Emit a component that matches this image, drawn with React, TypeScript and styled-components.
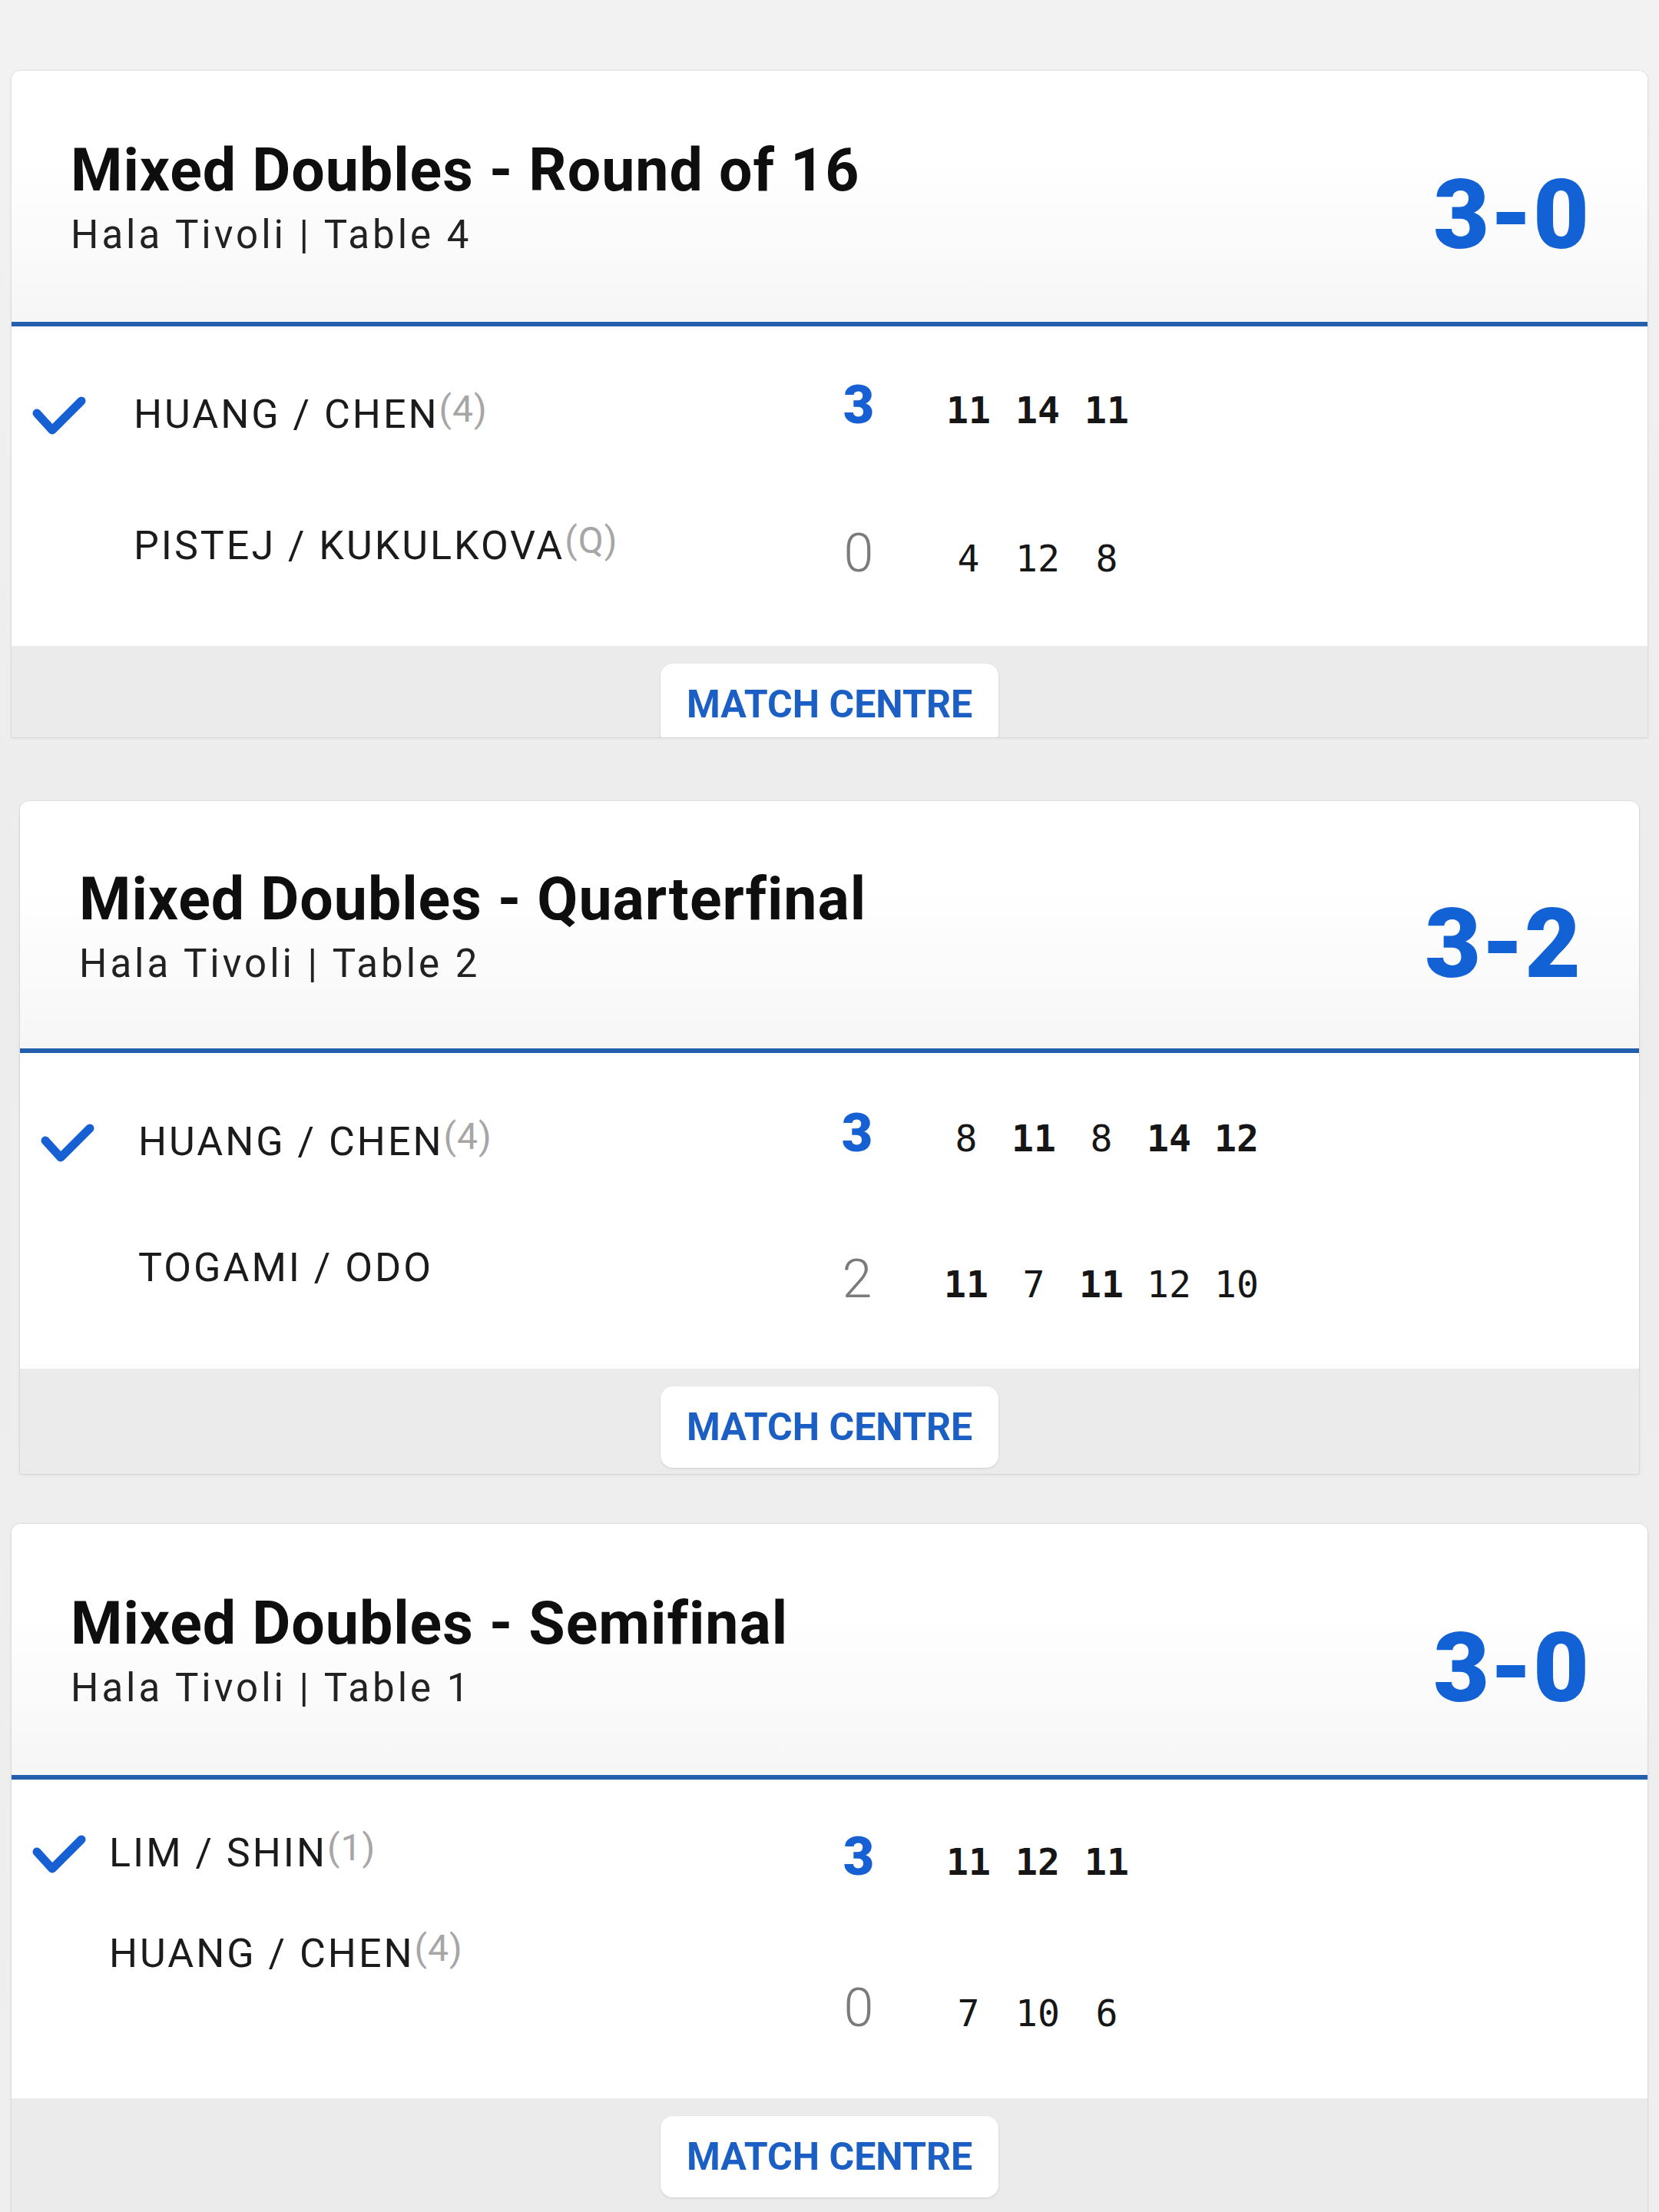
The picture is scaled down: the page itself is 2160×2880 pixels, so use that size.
import React from 'react'
import styled, { createGlobalStyle } from 'styled-components'

type Team = {
  name: string
  seed?: string
  sets: number
  games: number[]
}

type Layout = {
  top: number
  inset: number
  headerHeight: number
  headerPad: number
  bodyHeight: number
  namesWidth: number
  namesPad: number
  namesGap: number
  checkSlot: number
  scoresPad: number
  scoresGap: number
  gameWidth: number
  footerHeight: number
}

type Match = {
  title: string
  venue: string
  result: string
  teams: [Team, Team]
  layout: Layout
}

const matches: Match[] = [
  {
    title: 'Mixed Doubles - Round of 16',
    venue: 'Hala Tivoli | Table 4',
    result: '3-0',
    teams: [
      { name: 'HUANG / CHEN', seed: '(4)', sets: 3, games: [11, 14, 11] },
      { name: 'PISTEJ / KUKULKOVA', seed: '(Q)', sets: 0, games: [4, 12, 8] },
    ],
    layout: {
      top: 0,
      inset: 15,
      headerHeight: 333,
      headerPad: 85,
      bodyHeight: 416,
      namesWidth: 1038,
      namesPad: 81,
      namesGap: 111,
      checkSlot: 134,
      scoresPad: 62,
      scoresGap: 113,
      gameWidth: 90,
      footerHeight: 119,
    },
  },
  {
    title: 'Mixed Doubles - Quarterfinal',
    venue: 'Hala Tivoli | Table 2',
    result: '3-2',
    teams: [
      { name: 'HUANG / CHEN', seed: '(4)', sets: 3, games: [8, 11, 8, 14, 12] },
      { name: 'TOGAMI / ODO', sets: 2, games: [11, 7, 11, 12, 10] },
    ],
    layout: {
      top: 83,
      inset: 26,
      headerHeight: 328,
      headerPad: 83,
      bodyHeight: 411,
      namesWidth: 1025,
      namesPad: 82,
      namesGap: 108,
      checkSlot: 129,
      scoresPad: 64,
      scoresGap: 110,
      gameWidth: 88,
      footerHeight: 137,
    },
  },
  {
    title: 'Mixed Doubles - Semifinal',
    venue: 'Hala Tivoli | Table 1',
    result: '3-0',
    teams: [
      { name: 'LIM / SHIN', seed: '(1)', sets: 3, games: [11, 12, 11] },
      { name: 'HUANG / CHEN', seed: '(4)', sets: 0, games: [7, 10, 6] },
    ],
    layout: {
      top: 65,
      inset: 15,
      headerHeight: 333,
      headerPad: 85,
      bodyHeight: 415,
      namesWidth: 1038,
      namesPad: 62,
      namesGap: 71,
      checkSlot: 102,
      scoresPad: 60,
      scoresGap: 117,
      gameWidth: 90,
      footerHeight: 220,
    },
  },
]

const GlobalStyle = createGlobalStyle`
  html, body {
    margin: 0;
    padding: 0;
  }
  body {
    background: #eeeeee;
    font-family: Roboto, 'Noto Sans', Arial, sans-serif;
    -webkit-font-smoothing: antialiased;
  }
`

const Page = styled.div`
  width: 2160px;
  height: 2880px;
  box-sizing: border-box;
  padding-top: 92px;
  display: flex;
  flex-direction: column;
  overflow: hidden;
  background: linear-gradient(180deg, #f2f2f2 0%, #ededed 40%, #efefef 100%);
`

const Card = styled.section<{ $top: number; $inset: number }>`
  flex: none;
  margin: ${(p) => p.$top}px ${(p) => p.$inset}px 0;
  background: #fff;
  border-radius: 12px 12px 0 0;
  overflow: hidden;
  box-shadow: 0 0 0 1px rgba(0, 0, 0, 0.05), 0 1px 4px rgba(0, 0, 0, 0.08);
`

const Header = styled.header<{ $h: number; $pad: number }>`
  height: ${(p) => p.$h}px;
  box-sizing: border-box;
  padding: ${(p) => p.$pad}px 76px 0 77px;
  display: flex;
  justify-content: space-between;
  align-items: flex-start;
  background: linear-gradient(180deg, #ffffff 0%, #ffffff 35%, #f6f6f6 100%);
  border-bottom: 6px solid #235fad;
`

const Titles = styled.div`
  display: flex;
  flex-direction: column;
`

const Title = styled.h2`
  margin: 0;
  font-size: 77px;
  line-height: 90px;
  font-weight: 700;
  letter-spacing: 1px;
  color: #0e0e0e;
  white-space: nowrap;
`

const Venue = styled.div`
  margin-top: 9px;
  font-size: 51px;
  line-height: 60px;
  letter-spacing: 4px;
  color: #222;
  white-space: nowrap;
`

const Result = styled.div`
  margin-top: 40px;
  font-size: 126px;
  line-height: 126px;
  font-weight: 900;
  color: #1262d6;
`

const Body = styled.div<{ $h: number }>`
  height: ${(p) => p.$h}px;
  box-sizing: border-box;
  padding-left: 25px;
  display: flex;
  background: #fff;
`

const Names = styled.div<{ $w: number; $pad: number; $gap: number }>`
  flex: 0 0 ${(p) => p.$w}px;
  display: flex;
  flex-direction: column;
  padding-top: ${(p) => p.$pad}px;
  gap: ${(p) => p.$gap}px;
`

const NameRow = styled.div`
  display: flex;
  align-items: center;
  height: 60px;
`

const CheckSlot = styled.div<{ $w: number }>`
  flex: 0 0 ${(p) => p.$w}px;
  display: flex;
  align-items: center;
  svg {
    margin-top: 12px;
  }
`

const TeamName = styled.span`
  font-size: 52px;
  line-height: 60px;
  letter-spacing: 3px;
  color: #1b1b1b;
  white-space: nowrap;
`

const Seed = styled.span`
  font-size: 48px;
  letter-spacing: 1px;
  vertical-align: 8px;
  color: #a6a6a6;
`

const Scores = styled.div<{ $pad: number; $gap: number }>`
  display: flex;
  flex-direction: column;
  padding-top: ${(p) => p.$pad}px;
  gap: ${(p) => p.$gap}px;
`

const ScoreRow = styled.div`
  display: flex;
  align-items: baseline;
  height: 80px;
`

const SetScore = styled.span<{ $won: boolean }>`
  width: 80px;
  margin-right: 58px;
  text-align: center;
  font-size: 70px;
  line-height: 80px;
  font-weight: ${(p) => (p.$won ? 900 : 300)};
  color: ${(p) => (p.$won ? '#1660d4' : '#7b7b7b')};
`

const Game = styled.span<{ $w: number; $won: boolean }>`
  width: ${(p) => p.$w}px;
  text-align: center;
  font-family: 'DejaVu Sans Mono', 'Liberation Mono', monospace;
  font-size: 48px;
  line-height: 80px;
  font-weight: ${(p) => (p.$won ? 700 : 400)};
  color: #161616;
`

const Footer = styled.footer<{ $h: number }>`
  height: ${(p) => p.$h}px;
  box-sizing: border-box;
  padding-top: 23px;
  display: flex;
  justify-content: center;
  align-items: flex-start;
  background: #ebebeb;
`

const MatchCentre = styled.button`
  width: 440px;
  height: 106px;
  border: none;
  border-radius: 16px;
  background: #fff;
  box-shadow: 0 1px 3px rgba(0, 0, 0, 0.12);
  font-family: Roboto, Arial, sans-serif;
  font-size: 50px;
  font-weight: 700;
  color: #1b5fc5;
  cursor: pointer;
`

function Check() {
  return (
    <svg width="74" height="56" viewBox="0 0 74 56" aria-hidden>
      <polyline
        points="8,24 28,46 66,8"
        fill="none"
        stroke="#1660d4"
        strokeWidth="11"
        strokeLinecap="round"
        strokeLinejoin="round"
      />
    </svg>
  )
}

function MatchCard({ match }: { match: Match }) {
  const { layout: l, teams } = match
  const winner = teams[0].sets > teams[1].sets ? 0 : 1

  return (
    <Card $top={l.top} $inset={l.inset}>
      <Header $h={l.headerHeight} $pad={l.headerPad}>
        <Titles>
          <Title>{match.title}</Title>
          <Venue>{match.venue}</Venue>
        </Titles>
        <Result>{match.result}</Result>
      </Header>

      <Body $h={l.bodyHeight}>
        <Names $w={l.namesWidth} $pad={l.namesPad} $gap={l.namesGap}>
          {teams.map((t, i) => (
            <NameRow key={t.name + i}>
              <CheckSlot $w={l.checkSlot}>{i === winner && <Check />}</CheckSlot>
              <TeamName>
                {t.name}
                {t.seed && <Seed>{t.seed}</Seed>}
              </TeamName>
            </NameRow>
          ))}
        </Names>

        <Scores $pad={l.scoresPad} $gap={l.scoresGap}>
          {teams.map((t, i) => {
            const other = teams[1 - i]
            return (
              <ScoreRow key={t.name + i}>
                <SetScore $won={i === winner}>{t.sets}</SetScore>
                {t.games.map((g, j) => (
                  <Game key={j} $w={l.gameWidth} $won={g > other.games[j]}>
                    {g}
                  </Game>
                ))}
              </ScoreRow>
            )
          })}
        </Scores>
      </Body>

      <Footer $h={l.footerHeight}>
        <MatchCentre>MATCH CENTRE</MatchCentre>
      </Footer>
    </Card>
  )
}

export default function App() {
  return (
    <>
      <GlobalStyle />
      <Page>
        {matches.map((m) => (
          <MatchCard key={m.title} match={m} />
        ))}
      </Page>
    </>
  )
}
